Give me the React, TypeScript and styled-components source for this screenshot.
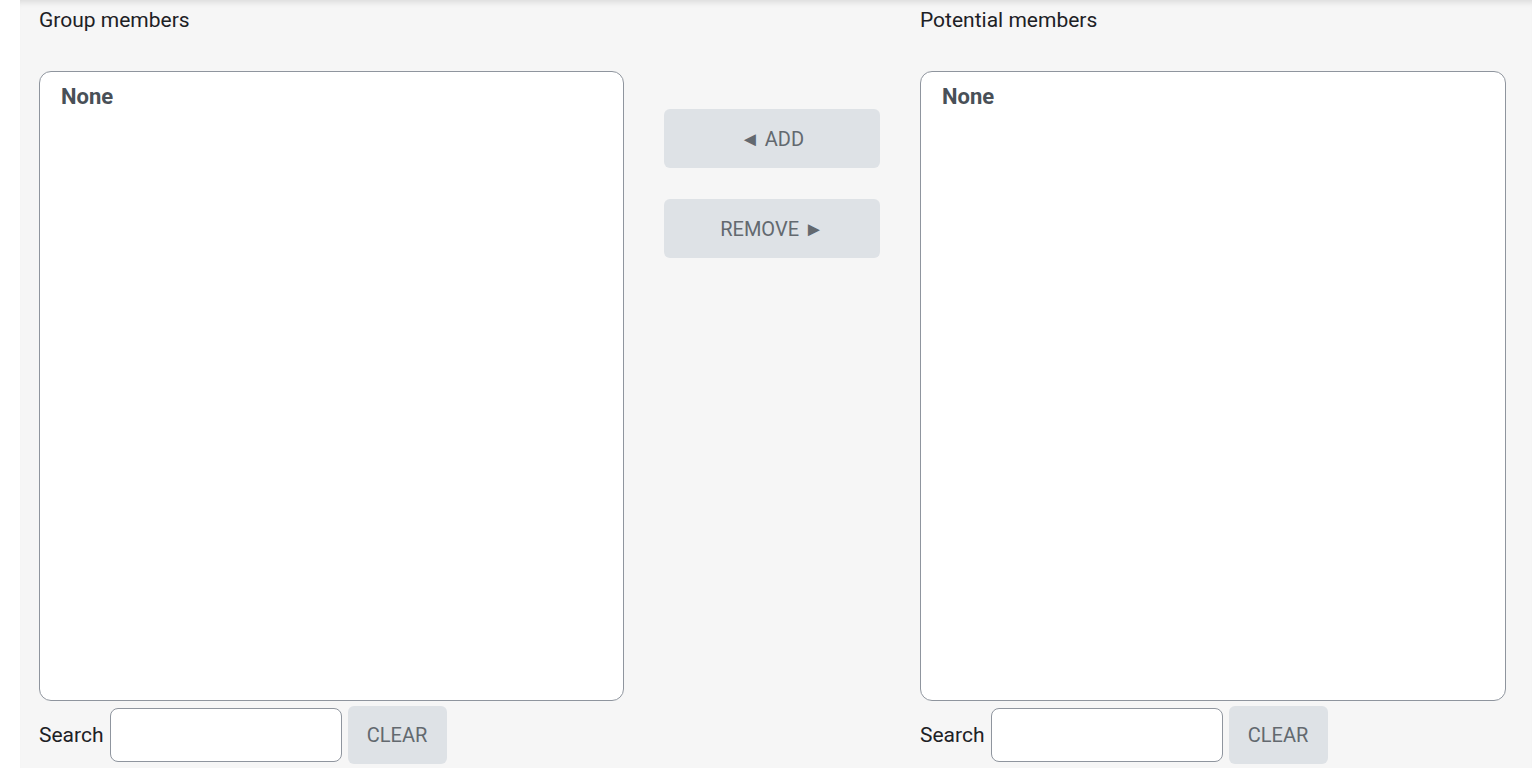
import React from 'react';
import styled, { createGlobalStyle } from 'styled-components';

const GlobalStyle = createGlobalStyle`
    html, body {
        margin: 0;
        padding: 0;
        background: #ffffff;
    }
    body {
        font-family: Roboto, "Liberation Sans", sans-serif;
        color: #1d2125;
    }
`;

interface ColumnProps {
    label: string;
}

const MemberColumn = ({ label }: ColumnProps) => (
    <Column>
        <Label>{label}</Label>
        <ListBox>
            <EmptyItem>None</EmptyItem>
        </ListBox>
        <SearchRow>
            <SearchLabel>Search</SearchLabel>
            <SearchInput type="text" />
            <ClearButton>CLEAR</ClearButton>
        </SearchRow>
    </Column>
);

const App = () => {
    return (
        <>
            <GlobalStyle />
            <Page>
                <Main>
                    <MemberColumn label="Group members" />
                    <Actions>
                        <ActionButton>◄ ADD</ActionButton>
                        <ActionButton>REMOVE ►</ActionButton>
                    </Actions>
                    <MemberColumn label="Potential members" />
                </Main>
            </Page>
        </>
    );
};

const Page = styled.div`
    margin-left: 20px;
    height: 768px;
    background: #f6f6f6;
    box-shadow: inset 0 7px 6px -5px rgba(0, 0, 0, 0.12);
`;

const Main = styled.div`
    display: grid;
    grid-template-columns: 585px 1fr 586px;
    padding: 0 26px 0 19px;
    height: 100%;
    box-sizing: border-box;
`;

const Column = styled.div`
    display: flex;
    flex-direction: column;
`;

const Label = styled.div`
    height: 40px;
    line-height: 40px;
    font-size: 21px;
    color: #1d2125;
    margin-bottom: 31px;
`;

const ListBox = styled.div`
    height: 630px;
    box-sizing: border-box;
    background: #fff;
    border: 1px solid #8f959e;
    border-radius: 12px;
    padding: 13px 21px;
`;

const EmptyItem = styled.div`
    font-size: 22px;
    font-weight: 700;
    line-height: 24px;
    color: #495057;
`;

const SearchRow = styled.div`
    display: flex;
    align-items: center;
    gap: 6px;
    margin-top: 5px;
    height: 58px;
`;

const SearchLabel = styled.span`
    font-size: 21px;
    color: #1d2125;
`;

const SearchInput = styled.input`
    width: 232px;
    height: 54px;
    box-sizing: border-box;
    border: 1px solid #8f959e;
    border-radius: 8px;
    background: #fff;
    outline: none;
`;

const ClearButton = styled.button`
    width: 99px;
    height: 58px;
    border: none;
    border-radius: 6px;
    background: #dee2e6;
    color: #63696f;
    font-family: inherit;
    font-size: 20px;
`;

const Actions = styled.div`
    display: flex;
    flex-direction: column;
    align-items: center;
    gap: 31px;
    padding-top: 109px;
`;

const ActionButton = styled.button`
    width: 216px;
    height: 59px;
    border: none;
    border-radius: 6px;
    background: #dee2e6;
    color: #63696f;
    font-family: inherit;
    font-size: 20px;
`;

export default App;
